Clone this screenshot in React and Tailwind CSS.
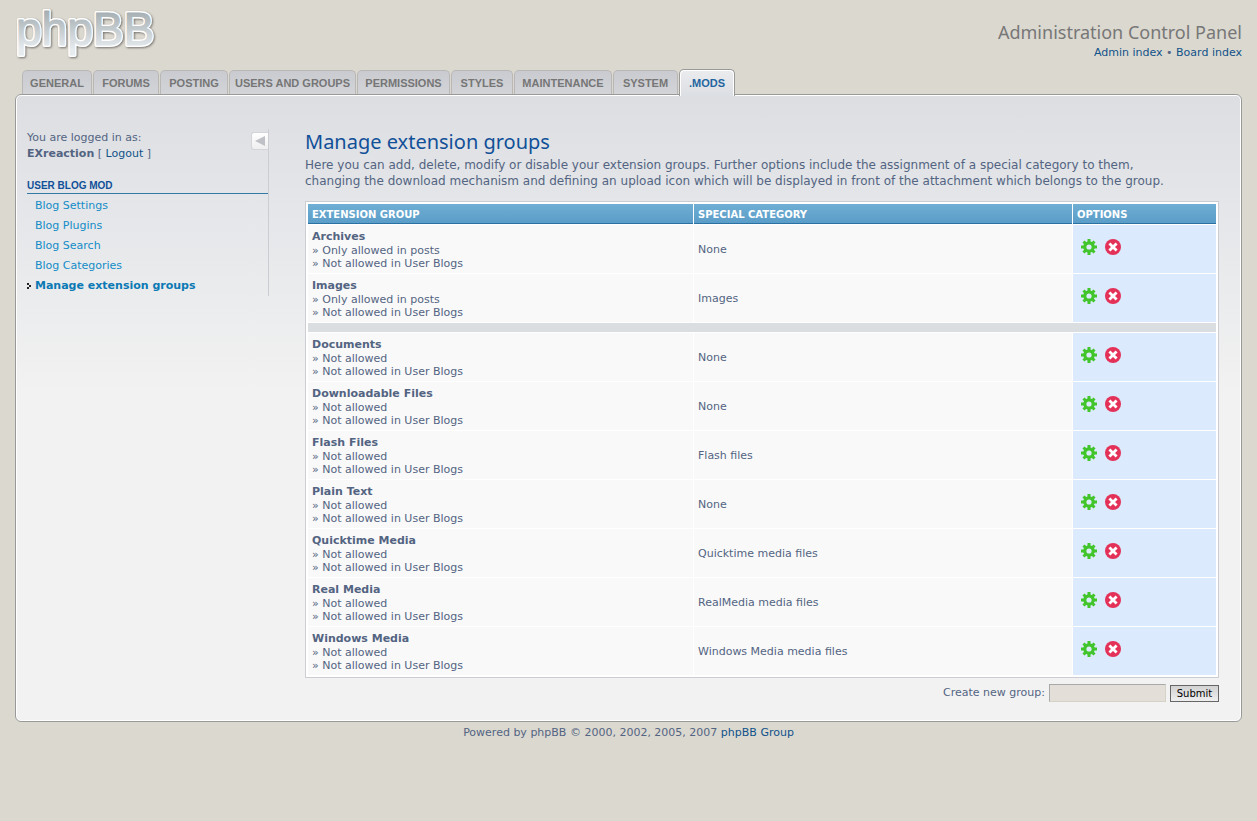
import React from 'react';

const tabs = [
  { name: 'GENERAL', width: 'w-[70px]' },
  { name: 'FORUMS', width: 'w-[66px]' },
  { name: 'POSTING', width: 'w-[68px]' },
  { name: 'USERS AND GROUPS', width: 'w-[127px]' },
  { name: 'PERMISSIONS', width: 'w-[93px]' },
  { name: 'STYLES', width: 'w-[62px]' },
  { name: 'MAINTENANCE', width: 'w-[98px]' },
  { name: 'SYSTEM', width: 'w-[65px]' },
];

const menu = ['Blog Settings', 'Blog Plugins', 'Blog Search', 'Blog Categories'];

const allowedGroups = [
  { name: 'Archives', rule: 'Only allowed in posts', category: 'None' },
  { name: 'Images', rule: 'Only allowed in posts', category: 'Images' },
];

const blockedGroups = [
  { name: 'Documents', rule: 'Not allowed', category: 'None' },
  { name: 'Downloadable Files', rule: 'Not allowed', category: 'None' },
  { name: 'Flash Files', rule: 'Not allowed', category: 'Flash files' },
  { name: 'Plain Text', rule: 'Not allowed', category: 'None' },
  { name: 'Quicktime Media', rule: 'Not allowed', category: 'Quicktime media files' },
  { name: 'Real Media', rule: 'Not allowed', category: 'RealMedia media files' },
  { name: 'Windows Media', rule: 'Not allowed', category: 'Windows Media media files' },
];

function Logo() {
  return (
    <svg width="146" height="56" viewBox="0 0 146 56" role="img" aria-label="phpBB" className="block overflow-visible">
      <defs>
        <linearGradient id="logoFill" gradientUnits="userSpaceOnUse" x1="0" y1="7" x2="0" y2="44">
          <stop offset="0" stopColor="#a6afb3" />
          <stop offset="1" stopColor="#e6ebee" />
        </linearGradient>
        <filter id="logoShadow" x="-10%" y="-10%" width="120%" height="130%">
          <feDropShadow dx="1" dy="1" stdDeviation="1" floodColor="#5a5853" floodOpacity="0.8" />
        </filter>
      </defs>
      <g fontFamily="'Liberation Sans', Arial, sans-serif" fontSize="46" strokeLinejoin="round">
        <text x="1" y="40" fill="#ffffff" stroke="#ffffff" strokeWidth="4" filter="url(#logoShadow)">
          phpBB
        </text>
        <text x="1" y="40" fill="url(#logoFill)" stroke="url(#logoFill)" strokeWidth="1.2" aria-hidden="true">
          phpBB
        </text>
      </g>
    </svg>
  );
}

function GearIcon() {
  return (
    <svg width="16" height="16" viewBox="0 0 16 16" className="block" aria-hidden="true">
      <g fill="#41c52b">
        <rect x="6.5" y="0" width="3" height="16" />
        <rect x="0" y="6.5" width="16" height="3" />
        <rect x="6.5" y="0.2" width="3" height="15.6" transform="rotate(45 8 8)" />
        <rect x="6.5" y="0.2" width="3" height="15.6" transform="rotate(-45 8 8)" />
        <circle cx="8" cy="8" r="5.8" />
      </g>
      <circle cx="8" cy="8" r="2.6" fill="#dceafd" />
    </svg>
  );
}

function DeleteIcon() {
  return (
    <svg width="16" height="16" viewBox="0 0 16 16" className="block" aria-hidden="true">
      <circle cx="8" cy="8" r="8" fill="#e33158" />
      <path d="M5.4 5.4 L10.6 10.6 M10.6 5.4 L5.4 10.6" stroke="#fff" strokeWidth="2.8" strokeLinecap="square" />
    </svg>
  );
}

function GroupRow({ group }) {
  return (
    <tr>
      <td className="h-[48px] bg-[#f9f9f9] px-1 pt-[2px] pb-0">
        <strong className="block leading-[14px]">{group.name}</strong>
        <span className="block leading-[13px]">» {group.rule}</span>
        <span className="block leading-[13px]">» Not allowed in User Blogs</span>
      </td>
      <td className="bg-[#f9f9f9] px-1 pt-[2px] pb-0">{group.category}</td>
      <td className="bg-[#dceafd] px-2 py-0">
        <div className="flex gap-2 pb-1">
          <a href="#edit" aria-label={`Edit ${group.name}`}><GearIcon /></a>
          <a href="#delete" aria-label={`Delete ${group.name}`}><DeleteIcon /></a>
        </div>
      </td>
    </tr>
  );
}

function HeadCell({ children, className }) {
  return (
    <th
      scope="col"
      className={`h-[20px] border-b border-[#2b72a3] bg-linear-to-b from-[#70aed3] to-[#5a9dc8] px-1 pt-[2px] pb-0 text-left text-[10px] leading-[17px] font-bold text-white ${className}`}
    >
      {children}
    </th>
  );
}

export default function App() {
  return (
    <div className="min-h-screen bg-[#dbd8d0] px-[15px] font-['DejaVu_Sans',Verdana,sans-serif] text-[11px] text-[#536482]">
      <header className="flex h-[69px] justify-between">
        <a href="#index" className="pt-[5px]"><Logo /></a>
        <div className="pt-[21px] text-right">
          <h1 className="mb-[2px] font-['Noto_Sans','Trebuchet_MS',sans-serif] text-[18px] leading-[22px] text-[#777]">
            Administration Control Panel
          </h1>
          <p className="leading-4">
            <a href="#admin" className="text-[#105289]">Admin index</a> •{' '}
            <a href="#board" className="text-[#105289]">Board index</a>
          </p>
        </div>
      </header>

      <nav className="relative flex h-[25px] items-end gap-px px-[7px] font-['Liberation_Sans',Arial,sans-serif] text-[11px] font-bold text-[#767676]">
        {tabs.map((tab) => (
          <a
            key={tab.name}
            href="#tab"
            className={`flex h-[24px] items-center justify-center rounded-t-[5px] border border-b-0 border-[#bab8b7] bg-linear-to-b from-[#cacbd0] to-[#d2d4d8] pt-px whitespace-nowrap ${tab.width}`}
          >
            {tab.name}
          </a>
        ))}
        <a
          href="#tab"
          aria-current="page"
          className="-mb-[2px] flex h-[27px] w-[56px] items-center justify-center rounded-t-[5px] border border-b-0 border-[#999] bg-linear-to-b from-[#ebecee] to-[#dcdfe3] text-[#23649f] shadow-[inset_1px_1px_0_#fff,inset_-1px_1px_0_#fff]"
        >
          .MODS
        </a>
      </nav>

      <div className="rounded-[6px] border border-[#999] bg-white p-px">
        <div className="flex items-start rounded-[4px] bg-[#f2f2f2] bg-linear-to-b from-[#dcdee2] via-[#e4e6e9] via-[110px] to-[#f2f2f2] to-[300px] pt-[33px] pr-[21px] pb-[18px] pl-[10px]">
          <aside className="w-[242px] shrink-0 border-r border-[#cbcdd2]">
            <div className="flex items-start justify-between">
              <p className="pt-px leading-4">
                You are logged in as:
                <br />
                <strong>EXreaction</strong> [ <a href="#logout" className="text-[#105289]">Logout</a> ]
              </p>
              <button
                type="button"
                aria-label="Hide menu"
                className="mt-[3px] flex h-[18px] w-[17px] items-center justify-center rounded-l-[3px] border border-r-0 border-[#d3d5da] bg-linear-to-b from-white to-[#efefef]"
              >
                <svg width="10" height="10" viewBox="0 0 10 10" aria-hidden="true">
                  <path d="M10 0 V10 L0 5 Z" fill="#bfc1c7" />
                </svg>
              </button>
            </div>
            <h2 className="mt-[17px] border-b border-[#327aa5] font-['Liberation_Sans',Arial,sans-serif] text-[10px] leading-[14px] font-bold text-[#115098]">
              USER BLOG MOD
            </h2>
            <ul className="pt-[2px] leading-5 text-[#138cc8]">
              {menu.map((item) => (
                <li key={item} className="pl-2"><a href="#item">{item}</a></li>
              ))}
              <li className="flex items-center gap-1 font-bold text-[#0b79b4]">
                <svg width="4" height="6" viewBox="0 0 4 6" aria-hidden="true">
                  <path d="M0 0h2v2h-2z M2 2h2v2h-2z M0 4h2v2h-2z" fill="#222" />
                </svg>
                <a href="#item" aria-current="page">Manage extension groups</a>
              </li>
            </ul>
          </aside>

          <main className="ml-[36px] min-w-0 flex-1">
            <h2 className="pb-[2px] font-['Noto_Sans','Trebuchet_MS',sans-serif] text-[20px] leading-[26px] text-[#115098]">
              Manage extension groups
            </h2>
            <p className="text-[12px] leading-4">
              Here you can add, delete, modify or disable your extension groups. Further options include the assignment of a special category to them,
              <br />
              changing the download mechanism and defining an upload icon which will be displayed in front of the attachment which belongs to the group.
            </p>

            <div className="mt-3 border border-[#cbcdd2] bg-white p-px">
              <table className="w-full table-fixed border-separate border-spacing-px">
                <thead>
                  <tr>
                    <HeadCell className="w-[385px]">EXTENSION GROUP</HeadCell>
                    <HeadCell className="w-auto">SPECIAL CATEGORY</HeadCell>
                    <HeadCell className="w-[143px]">OPTIONS</HeadCell>
                  </tr>
                </thead>
                <tbody>
                  {allowedGroups.map((group) => <GroupRow key={group.name} group={group} />)}
                  <tr><td colSpan={3} className="h-[9px] bg-[#dbdee1] p-0" /></tr>
                  {blockedGroups.map((group) => <GroupRow key={group.name} group={group} />)}
                </tbody>
              </table>
            </div>

            <form className="mt-[6px] flex items-center justify-end" onSubmit={(event) => event.preventDefault()}>
              <label htmlFor="group">Create new group:</label>
              <input
                id="group"
                type="text"
                className="ml-1 h-[18px] w-[117px] border border-t-[#a9a9a9] border-r-[#d5d3c8] border-b-[#d5d3c8] border-l-[#a9a9a9] bg-[#e3dfd8] px-1 outline-none"
              />
              <button
                type="submit"
                className="ml-1 h-[17px] w-[49px] border border-[#666] bg-linear-to-b from-[#d2d2d2] to-[#efefef] text-[10px] leading-[15px] text-black"
              >
                Submit
              </button>
            </form>
          </main>
        </div>
      </div>

      <footer className="pt-[3px] text-center leading-4">
        Powered by phpBB © 2000, 2002, 2005, 2007 <a href="#phpbb" className="text-[#105289]">phpBB Group</a>
      </footer>
    </div>
  );
}
